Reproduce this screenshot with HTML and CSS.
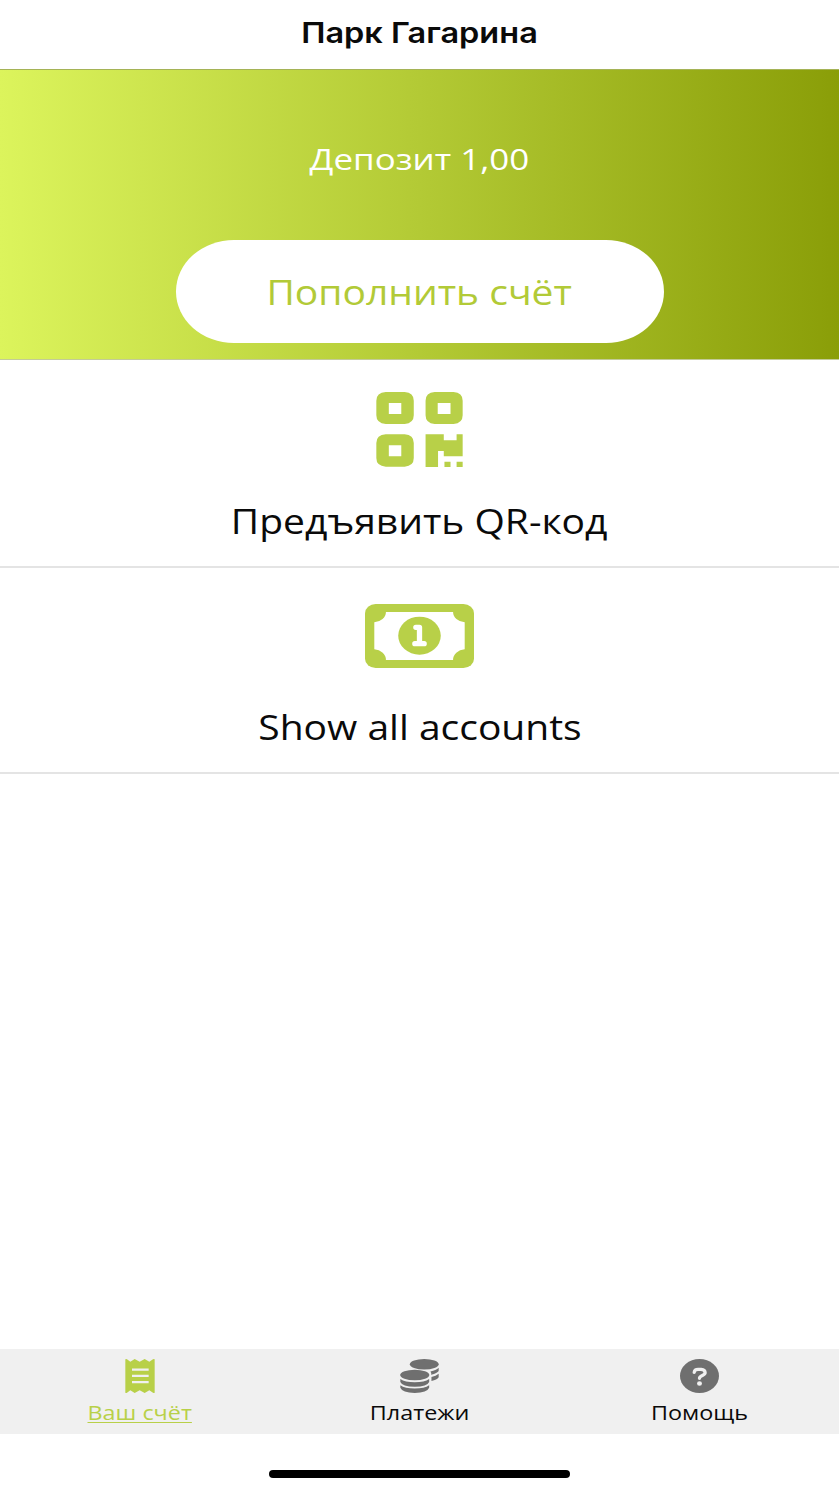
FILE: index.html
```html
<!DOCTYPE html>
<html lang="ru">
<head>
<meta charset="utf-8">
<title>Парк Гагарина</title>
<link rel="stylesheet" href="styles.css">
</head>
<body>
<div class="app">
  <header class="header"><h1 class="title">Парк Гагарина</h1></header>
  <section class="balance">
    <p class="deposit"><span class="wide">Депозит 1,00</span></p>
    <button class="topup"><span class="wide">Пополнить счёт</span></button>
  </section>
  <main class="actions">
    <a class="action action-qr">
      <svg class="icon-qr" viewBox="49 36 258 225" preserveAspectRatio="none" fill="currentColor">
        <path fill-rule="evenodd" d="M78 36h56q27 2 27 26v44q0 24-27 26H78q-28-2-28-26V62q0-24 28-26zM87 69v33h37V69z"/>
        <path fill-rule="evenodd" d="M223 36h56q27 2 27 26v44q0 24-27 26h-56q-27-2-27-26V62q0-24 27-26zM232 69v33h38V69z"/>
        <path fill-rule="evenodd" d="M78 163h56q27 2 27 26v45q0 24-27 26H78q-28-2-28-26v-45q0-24 28-26zM87 196v33h37v-33z"/>
        <path d="M196 163h54v18h38v-18h18v66h-56v-16h-17v48h-37zM252 245h18v16h-18zM288 245h18v16h-18z"/>
      </svg>
      <span class="label"><span class="wide">Предъявить QR-код</span></span>
    </a>
    <a class="action action-accounts">
      <svg class="icon-money" viewBox="45 42 328 192" preserveAspectRatio="none">
        <rect x="45" y="42" width="328" height="192" rx="32" ry="28" fill="currentColor"/>
        <path d="M108 66H310A37 31 0 0 0 345 97V178A37 31 0 0 0 310 210H108A37 31 0 0 0 73 178V97A37 31 0 0 0 108 66z" fill="#fff"/>
        <ellipse cx="209" cy="137" rx="64" ry="57" fill="currentColor"/>
        <path d="M198 112H209V161M195 161H223" fill="none" stroke="#fff" stroke-width="16" stroke-linecap="round" stroke-linejoin="round"/>
      </svg>
      <span class="label"><span class="wide">Show all accounts</span></span>
    </a>
  </main>
  <nav class="tabs">
    <a class="tab tab-active">
      <svg class="icon-receipt" viewBox="163 57 90 103" preserveAspectRatio="none">
        <path fill="currentColor" d="M164 58q2-2 5 0l10 7 13-8 15 8 15-8 14 8 11-7q3-2 5 0V159q-2 2-5 0l-11-7-14 8-15-8-15 8-13-8-10 7q-3 2-5 0z"/>
        <path d="M184 89H234M184 108H234M184 127H234" stroke="#f0f0f0" stroke-width="7"/>
      </svg>
      <span class="tab-label"><span class="wide">Ваш счёт</span></span>
    </a>
    <a class="tab">
      <svg class="icon-coins" viewBox="149 56 119 104" preserveAspectRatio="none" fill="currentColor">
        <ellipse cx="223" cy="72" rx="44" ry="16"/>
        <path d="M242 94Q259 91 267 83V93Q263 100 244 104Q246 99 242 94zM245 111Q259 108 267 101V112Q262 120 245 123z"/>
        <ellipse cx="194" cy="105" rx="44.500" ry="16"/>
        <path d="M150 117Q164 127 194 127T238 117V126Q232 140 194 141Q156 140 150 126zM150 136Q164 146 194 146T238 136V144Q232 159 194 160Q156 159 150 144z"/>
      </svg>
      <span class="tab-label"><span class="wide">Платежи</span></span>
    </a>
    <a class="tab">
      <svg class="icon-help" viewBox="149 56 118 104" preserveAspectRatio="none">
        <ellipse cx="208" cy="108" rx="59" ry="52" fill="currentColor"/>
        <path d="M192 97Q193 88 204 88H213Q225 89 225 98C225 107 208 106 208 115" fill="none" stroke="#f0f0f0" stroke-width="10" stroke-linecap="round"/>
        <ellipse cx="208" cy="131" rx="7.500" ry="7" fill="#f0f0f0"/>
      </svg>
      <span class="tab-label"><span class="wide">Помощь</span></span>
    </a>
  </nav>
  <footer class="home"><div class="home-bar"></div></footer>
</div>
</body>
</html>
```
FILE: styles.css
```css
* { box-sizing: border-box; }
body { margin: 0; background: #fff; color: #0a0a0a; font-family: "Open Sans", "Noto Sans", sans-serif; }
.app { height: 1492px; display: flex; flex-direction: column; overflow: hidden; }
.wide { display: inline-block; white-space: nowrap; transform: scaleX(1.147); }
.header { height: 70px; flex: none; padding-top: 13px; border-bottom: 1px solid #a5b356; text-align: center; }
.title { margin: 0; font: 600 28.5px/40px Inter, sans-serif; transform: scaleX(1.14); }
.balance { height: 290px; flex: none; display: flex; flex-direction: column; align-items: center; padding-top: 69px; background: linear-gradient(90deg, #dcf45c 0%, #b3ca35 50%, #8a9e08 100%); border-bottom: 1px solid #c3cb98; }
.deposit { margin: 0 0 61px; font-size: 30px; line-height: 40px; height: 40px; color: #fff; }
.deposit .wide { transform: scaleX(1.163); }
.topup { width: 488px; height: 103px; flex: none; padding: 0; border: 0; border-radius: 58px / 51.5px; background: #fff; color: #b2ca37; font: 34px/40px "Open Sans", "Noto Sans", sans-serif; }
.actions { flex: 1; }
.action { display: flex; flex-direction: column; align-items: center; color: #b8d048; border-bottom: 2px solid #e4e4e4; }
.action-qr { height: 208px; padding-top: 32px; }
.action-accounts { height: 206px; padding-top: 36px; }
.label { font-size: 34px; line-height: 40px; color: #0a0a0a; }
.icon-qr { width: 87px; height: 75px; margin-bottom: 34px; }
.icon-money { width: 109px; height: 64px; margin-bottom: 39px; }
.tabs { height: 85px; flex: none; display: grid; grid-template-columns: repeat(3, 1fr); background: #f0f0f0; }
.tab { display: flex; flex-direction: column; align-items: center; padding-top: 10px; color: #6f6f6f; }
.tab svg { height: 34px; margin-bottom: 7px; }
.tab-label { font-size: 20px; line-height: 26px; color: #0a0a0a; }
.tab-label .wide { transform: scaleX(1.168); }
.tab-active, .tab-active .tab-label { color: #b8d048; }
.tab-active .wide { text-decoration: underline; text-decoration-thickness: 1px; text-underline-offset: 2px; }
.icon-receipt { width: 30px; }
.icon-coins, .icon-help { width: 39px; }
.home { height: 58px; flex: none; display: flex; justify-content: center; padding-top: 36px; }
.home-bar { width: 301px; height: 8px; border-radius: 4px; background: #000; }
```
